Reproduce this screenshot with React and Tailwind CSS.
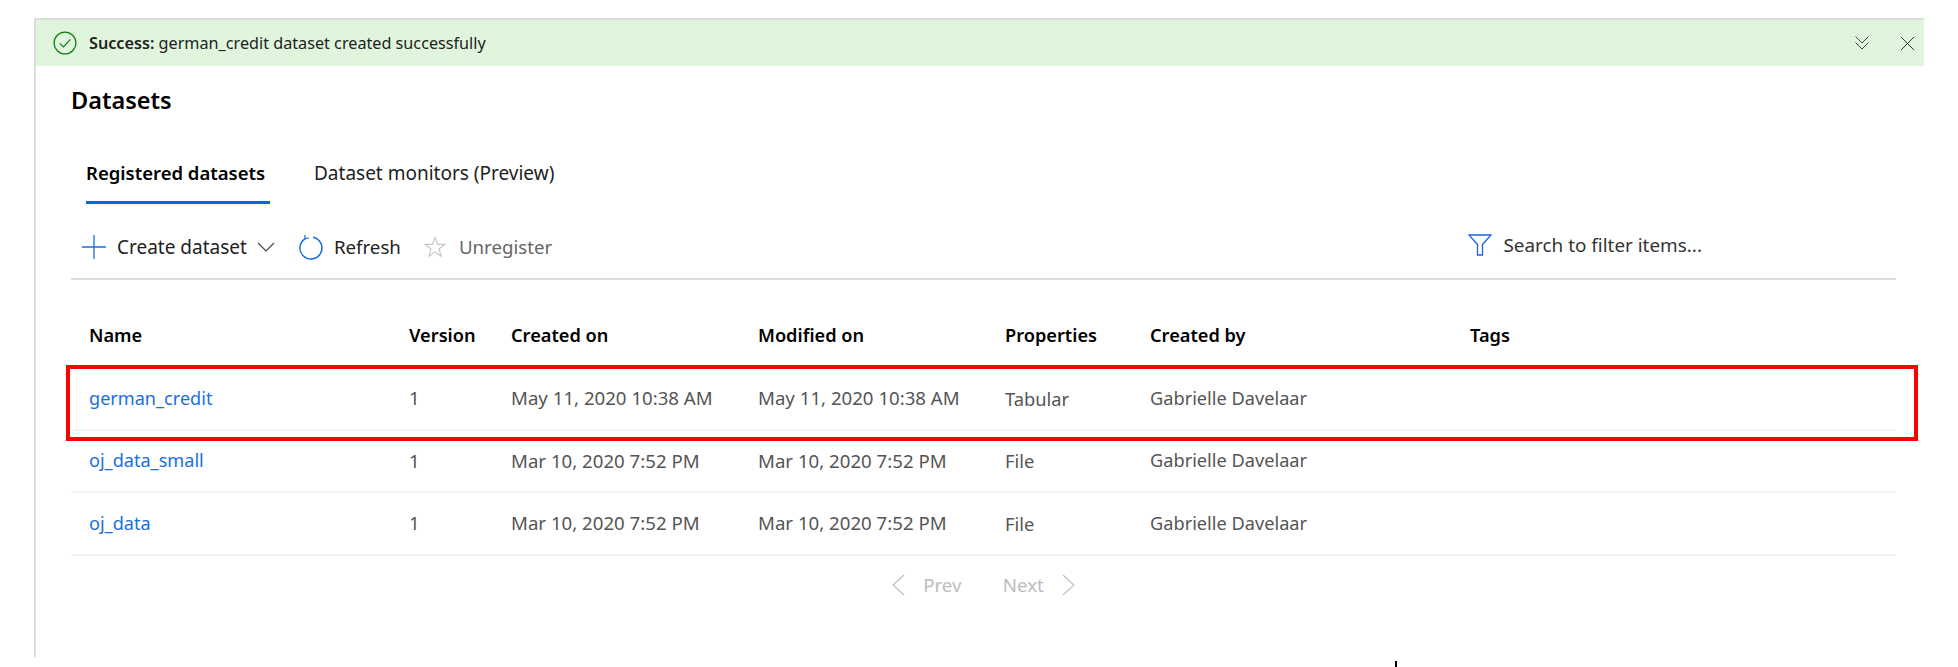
import React from 'react';

const rows = [
  { name: 'german_credit', created: 'May 11, 2020 10:38 AM', modified: 'May 11, 2020 10:38 AM', prop: 'Tabular' },
  { name: 'oj_data_small', created: 'Mar 10, 2020 7:52 PM', modified: 'Mar 10, 2020 7:52 PM', prop: 'File' },
  { name: 'oj_data', created: 'Mar 10, 2020 7:52 PM', modified: 'Mar 10, 2020 7:52 PM', prop: 'File' },
];

const gridCols = 'grid grid-cols-[320px_102px_247px_247px_145px_320px_1fr] pl-[18px]';

function SuccessIcon() {
  return (
    <svg width="24" height="24" viewBox="0 0 24 24" fill="none" stroke="#107c10" strokeWidth="1.2">
      <circle cx="12" cy="12" r="10.9" />
      <path d="M6.8 12.4l3.600 3.600 7-7.600" />
    </svg>
  );
}

function DoubleChevron() {
  return (
    <svg width="16" height="16" viewBox="0 0 16 16" fill="none" stroke="#444" strokeWidth="1">
      <path d="M1.500 1.500L8 8l6.500-6.500M1.500 7.500L8 14l6.500-6.500" />
    </svg>
  );
}

function CloseIcon() {
  return (
    <svg width="15" height="15" viewBox="0 0 15 15" fill="none" stroke="#333" strokeWidth="1">
      <path d="M1 1l13 13M14 1L1 14" />
    </svg>
  );
}

function PlusIcon() {
  return (
    <svg width="24" height="24" viewBox="0 0 24 24" fill="none" stroke="#1a6fe0" strokeWidth="1.3">
      <path d="M12 0v24M0 12h24" />
    </svg>
  );
}

function CaretDown() {
  return (
    <svg width="18" height="10" viewBox="0 0 18 10" fill="none" stroke="#444" strokeWidth="1.100">
      <path d="M1 1l8 8 8-8" />
    </svg>
  );
}

function RefreshIcon() {
  return (
    <svg width="24" height="26" viewBox="0 0 24 26" fill="none" stroke="#1a6fe0" strokeWidth="1.500">
      <path d="M6.400 4.500a11 11 0 1 0 7.600-1.300" />
      <path d="M5.600 0.800l0.800 3.700 3.700-0.500" strokeWidth="1.200" />
    </svg>
  );
}

function StarIcon() {
  return (
    <svg width="22" height="24" viewBox="0 0 24 24" fill="none" stroke="#c8c8c8" strokeWidth="1.300">
      <path d="M12 1.500l2.800 7.600h8l-6.400 5 2.300 8L12 17.300l-6.700 4.800 2.300-8-6.400-5h8z" />
    </svg>
  );
}

function FilterIcon() {
  return (
    <svg width="24" height="22" viewBox="0 0 24 22" fill="none" stroke="#1a62e0" strokeWidth="1.300">
      <path d="M1 1h22l-8.500 9.500V21h-5V10.500z" />
    </svg>
  );
}

function PageChevron({ flip }) {
  return (
    <svg width="13" height="22" viewBox="0 0 13 22" fill="none" stroke="#bdbdbd" strokeWidth="1.100">
      <path d={flip ? 'M1 1l11 10L1 21' : 'M12 1L1 11l11 10'} />
    </svg>
  );
}

export default function App() {
  return (
    <div className="relative h-[667px] w-[1958px] overflow-hidden bg-white font-['Noto_Sans',sans-serif] text-[19px]">
      <div className="ml-[34px] mt-[18px] h-[639px] w-[1890px] border-l-2 border-t-2 border-[#dcdcdc]">
        {/* Success banner */}
        <div className="flex h-[46px] items-center justify-between bg-[#dff6dd] pl-[17px] pr-[9px] text-[16.2px] text-[#222]">
          <div className="flex items-center gap-[12px]">
            <SuccessIcon />
            <span>
              <span className="font-semibold">Success:</span> german_credit dataset created successfully
            </span>
          </div>
          <div className="flex items-center gap-[30px]">
            <DoubleChevron />
            <CloseIcon />
          </div>
        </div>

        <div className="pl-[35px] pr-[28px]">
          <h1 className="mt-[18px] text-[23.500px] font-semibold leading-[32px] text-black">Datasets</h1>

          {/* Tabs */}
          <div className="mt-[33px] flex">
            <div className="ml-[15px] h-[55px] w-[184px] whitespace-nowrap border-b-[3px] border-[#0f62d8] pt-[10px] text-[18.500px] font-semibold text-black">
              Registered datasets
            </div>
            <div className="ml-[44px] pt-[10px] text-[#222]">Dataset monitors (Preview)</div>
          </div>

          {/* Toolbar */}
          <div className="flex h-[76px] items-center justify-between border-b-2 border-[#dcdcdc] pl-[11px] pt-[12px]">
            <div className="flex items-center">
              <PlusIcon />
              <span className="ml-[11px] text-[#222]">Create dataset</span>
              <span className="ml-[10px]"><CaretDown /></span>
              <span className="ml-[24px]"><RefreshIcon /></span>
              <span className="ml-[11px] text-[18.700px] text-[#222]">Refresh</span>
              <span className="ml-[23px]"><StarIcon /></span>
              <span className="ml-[13px] text-[18.700px] text-[#666]">Unregister</span>
            </div>
            <div className="mr-[194px] flex -translate-y-[2px] items-center gap-[11px] text-[18.900px] text-[#333]">
              <FilterIcon />
              <span>Search to filter items...</span>
            </div>
          </div>

          {/* Table */}
          <div className={`${gridCols} mt-[42px] h-[46px] items-start text-[18.200px] font-semibold text-black`}>
            <span>Name</span>
            <span>Version</span>
            <span>Created on</span>
            <span>Modified on</span>
            <span>Properties</span>
            <span>Created by</span>
            <span>Tags</span>
          </div>
          {rows.map((row) => (
            <div key={row.name} className={`${gridCols} h-[62.500px] items-center border-b-2 border-[#f3f3f3] text-[18.650px] text-[#555]`}>
              <span className="text-[18.100px] text-[#1a6fe0]">{row.name}</span>
              <span>1</span>
              <span>{row.created}</span>
              <span>{row.modified}</span>
              <span className="text-[18.300px]">{row.prop}</span>
              <span className="text-[18.200px]">Gabrielle Davelaar</span>
              <span />
            </div>
          ))}

          {/* Pagination */}
          <div className="mt-[15px] flex items-center justify-center text-[18.800px] text-[#bdbdbd]">
            <PageChevron />
            <span className="ml-[18px]">Prev</span>
            <span className="ml-[41px]">Next</span>
            <span className="ml-[18px] flex"><PageChevron flip /></span>
          </div>
        </div>
      </div>

      {/* Red highlight drawn over the first row */}
      <div className="absolute left-[66px] top-[365px] h-[76px] w-[1852px] border-[4px] border-[#ff0000]" />
      {/* Mouse cursor fragment */}
      <div className="absolute left-[1395px] top-[661px] h-[6px] w-[2px] bg-black" />
    </div>
  );
}
